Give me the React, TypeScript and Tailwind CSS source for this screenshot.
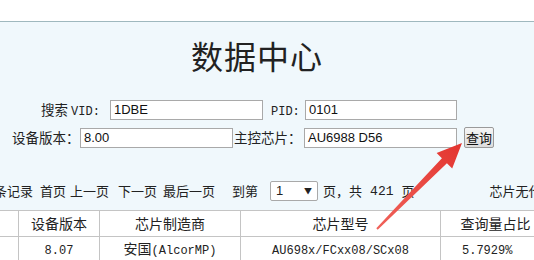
import React from "react";

const cjk = '"Noto Sans CJK SC", "Liberation Sans", sans-serif';
const mono = '"Liberation Mono", "Noto Sans CJK SC", monospace';

function Mono({ children, size = "text-[12px]" }: { children: React.ReactNode; size?: string }) {
  return <span style={{ fontFamily: mono }} className={size}>{children}</span>;
}

function Field({ value, width }: { value: string; width: string }) {
  return (
    <div
      className={`${width} shrink-0 h-[20px] bg-white border border-[#a9a9a9] flex items-center px-[3px] text-[13px] text-[#111]`}
      style={{ fontFamily: '"Liberation Sans", Arial, sans-serif' }}
    >
      {value}
    </div>
  );
}

const headers = ["", "设备版本", "芯片制造商", "芯片型号", "查询量占比"];

export default function App() {
  return (
    <div
      className="relative w-[534px] h-[260px] overflow-hidden bg-white text-[#222]"
      style={{ fontFamily: cjk }}
    >
      <div className="h-[21px] bg-white" />
      <div className="border-t border-[#9fb8be] bg-[#f0f8fc]">
        <div className="flex justify-center pr-[20px] pt-[16px]">
          <h1 className="text-[32px] leading-[34px] tracking-[1px] text-[#222]">数据中心</h1>
        </div>

        {/* search form */}
        <div className="mt-[27px] flex items-center pl-[41px] text-[13.5px] text-[#222]">
          <div className="w-[69px] shrink-0 whitespace-nowrap">
            搜索 <Mono>VID:</Mono>
          </div>
          <Field value="1DBE" width="w-[153px]" />
          <div className="w-[42px] shrink-0 pl-[8px]">
            <Mono>PID:</Mono>
          </div>
          <Field value="0101" width="w-[152px]" />
        </div>
        <div className="mt-[6px] flex items-center pl-[12px] text-[13.5px] text-[#222]">
          <div className="w-[68px] shrink-0 whitespace-nowrap">设备版本：</div>
          <Field value="8.00" width="w-[153px]" />
          <div className="w-[71px] shrink-0 whitespace-nowrap pl-[1px]">主控芯片：</div>
          <Field value="AU6988 D56" width="w-[153px]" />
          <button className="ml-[7px] shrink-0 w-[30px] h-[21px] border border-[#9a9a9a] rounded-[2px] bg-gradient-to-b from-[#f6f6f6] to-[#dcdcdc] text-[13px] leading-none text-[#111]">
            查询
          </button>
        </div>

        {/* pager */}
        <div className="mt-[32px] pb-[8px] flex items-center whitespace-nowrap text-[13px] text-[#222] overflow-hidden">
          <span className="ml-[-6px] shrink-0">条记录</span>
          <span className="ml-[7px] shrink-0">首页</span>
          <span className="ml-[4px] shrink-0">上一页</span>
          <span className="ml-[9px] shrink-0">下一页</span>
          <span className="ml-[6px] shrink-0">最后一页</span>
          <span className="ml-[17px] shrink-0">到第</span>
          <div className="ml-[12px] shrink-0 w-[48px] h-[20px] bg-white border border-[#a9a9a9] rounded-[2px] flex items-center justify-between px-[5px]">
            <span className="text-[13px]" style={{ fontFamily: '"Liberation Sans", sans-serif' }}>1</span>
            <span className="text-[8px] text-[#222]">▼</span>
          </div>
          <span className="ml-[5px] shrink-0">页，共</span>
          <span className="ml-[8px] shrink-0"><Mono size="text-[13px]">421</Mono></span>
          <span className="ml-[8px] shrink-0">页</span>
          <span className="ml-[75px] shrink-0">芯片无代码</span>
        </div>
      </div>

      {/* results */}
      <div className="overflow-hidden">
        <table className="ml-[-42px] w-[592px] table-fixed border-collapse bg-white text-[14px] text-[#222]">
          <colgroup>
            <col className="w-[60px]" />
            <col className="w-[81px]" />
            <col className="w-[141px]" />
            <col className="w-[200px]" />
            <col className="w-[110px]" />
          </colgroup>
          <thead>
            <tr className="h-[26px]">
              {headers.map((h, i) => (
                <th key={i} className="border border-[#c4c4c4] font-normal text-center">
                  {h}
                </th>
              ))}
            </tr>
          </thead>
          <tbody>
            <tr className="h-[26px]">
              <td className="border border-[#c4c4c4]" />
              <td className="border border-[#c4c4c4] text-center"><Mono>8.07</Mono></td>
              <td className="border border-[#c4c4c4] text-center">
                安国<Mono>(AlcorMP)</Mono>
              </td>
              <td className="border border-[#c4c4c4] text-center"><Mono>AU698x/FCxx08/SCx08</Mono></td>
              <td className="border border-[#c4c4c4] text-left pl-[21px]"><Mono>5.7929%</Mono></td>
            </tr>
            <tr className="h-[26px]">
              {headers.map((_, i) => (
                <td key={i} className="border border-[#c4c4c4]" />
              ))}
            </tr>
          </tbody>
        </table>
      </div>

      {/* annotation arrow */}
      <svg className="pointer-events-none absolute inset-0" width="534" height="260" viewBox="0 0 534 260">
        <defs>
          <linearGradient id="arr" x1="377" y1="229" x2="462" y2="143" gradientUnits="userSpaceOnUse">
            <stop offset="0" stopColor="#f0625a" />
            <stop offset="1" stopColor="#e3342f" />
          </linearGradient>
        </defs>
        <polygon
          points="462,143 436.6,153.1 441.9,158.3 376.3,228.3 377.7,229.7 446.9,163.3 452.2,168.5"
          fill="url(#arr)"
        />
      </svg>
    </div>
  );
}
